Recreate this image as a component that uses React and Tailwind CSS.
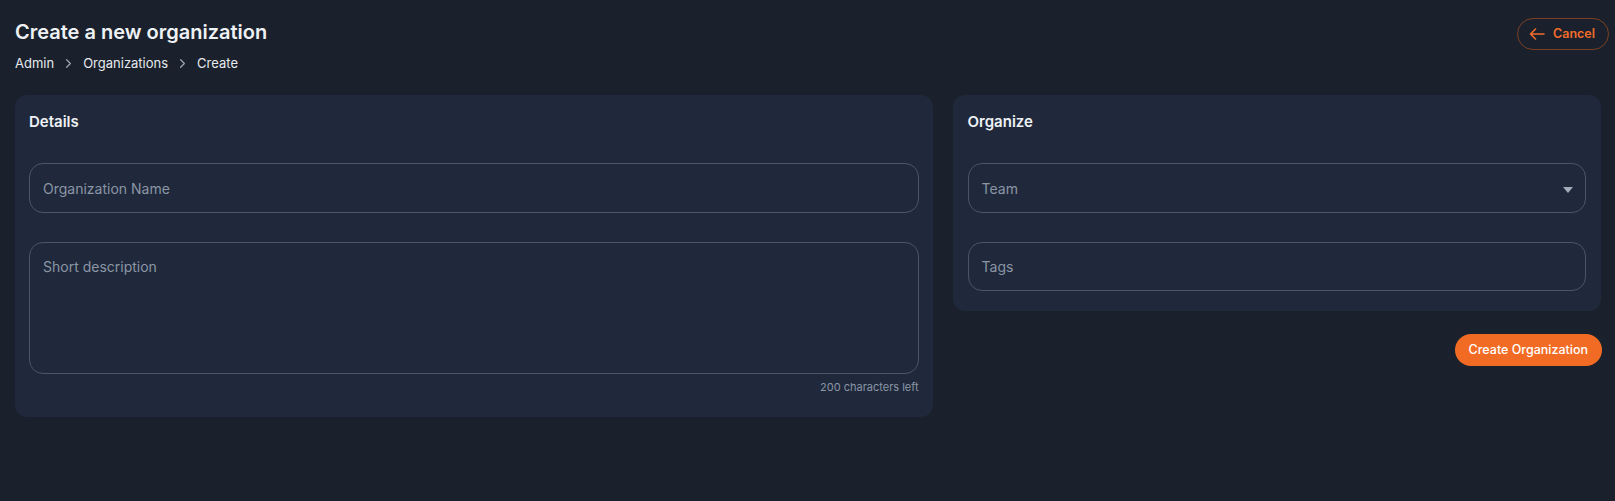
import { ChevronRight } from 'lucide-react';

function Crumbs() {
  const items = ['Admin', 'Organizations', 'Create'];
  return (
    <nav className="mt-[8px] flex items-center text-[13px] leading-[18px] text-[#e6e9ee]">
      {items.map((label, i) => (
        <span key={label} className="flex items-center">
          {i > 0 ? <ChevronRight size={15} strokeWidth={2} className="mx-[7px] text-[#9aa3b0]" /> : null}
          <span>{label}</span>
        </span>
      ))}
    </nav>
  );
}

function Field({ placeholder, className = '', children }) {
  return (
    <div
      className={`flex rounded-[14px] border border-[#4b5566] px-[13px] text-[14px] text-[#8b95a5] ${className}`}
    >
      <span>{placeholder}</span>
      {children}
    </div>
  );
}

export default function App() {
  return (
    <div
      className="min-h-[501px] bg-[#1a212c] pb-10"
      style={{ fontFamily: 'Inter, "Noto Sans", sans-serif' }}
    >
      <header className="flex items-start justify-between pl-[15px] pr-[6px] pt-[18px]">
        <div>
          <h1 className="text-[20px] font-semibold leading-[28px] text-[#eef1f5]">Create a new organization</h1>
          <Crumbs />
        </div>
        <button
          type="button"
          className="flex h-8 items-center gap-[8px] rounded-full border border-[#7a3f22] pl-[11px] pr-[13px] text-[12.5px] font-semibold text-[#f26b2a]"
        >
          <svg width="16" height="12" viewBox="0 0 16 12" fill="none" stroke="currentColor" strokeWidth="1.6" strokeLinecap="round" strokeLinejoin="round" aria-hidden>
            <path d="M15 6H1.5M6.5 1L1.5 6l5 5" />
          </svg>
          Cancel
        </button>
      </header>

      <div className="mt-[23px] grid grid-cols-[917fr_648fr] items-start gap-5 pl-[15px] pr-[14px]">
        <section className="rounded-xl bg-[#1f293b] px-[14px] pb-[23px] pt-4">
          <h2 className="text-[15px] font-semibold leading-[22px] text-[#eef1f5]">Details</h2>
          <Field placeholder="Organization Name" className="mt-[30px] h-[50px] items-center" />
          <Field placeholder="Short description" className="mt-[29px] h-[132px] items-start pt-[13px]" />
          <p className="mt-[6px] text-right text-[11px] leading-[14px] text-[#8b95a5]">200 characters left</p>
        </section>

        <div className="flex flex-col items-end">
          <section className="w-full rounded-xl bg-[#1f293b] px-[15px] pb-5 pt-4">
            <h2 className="text-[15px] font-semibold leading-[22px] text-[#eef1f5]">Organize</h2>
            <Field placeholder="Team" className="mt-[30px] h-[50px] items-center justify-between pr-[12px]">
              <svg width="10" height="6" viewBox="0 0 10 6" aria-hidden className="mt-[3px]">
                <path d="M0 0h10L5 6z" fill="#a3acb9" />
              </svg>
            </Field>
            <Field placeholder="Tags" className="mt-[29px] h-[49px] items-center" />
          </section>
          <button
            type="button"
            className="mr-[-1px] mt-[23px] h-8 rounded-full bg-[#f26b24] px-[14px] text-[12.5px] font-medium text-white"
          >
            Create Organization
          </button>
        </div>
      </div>
    </div>
  );
}
